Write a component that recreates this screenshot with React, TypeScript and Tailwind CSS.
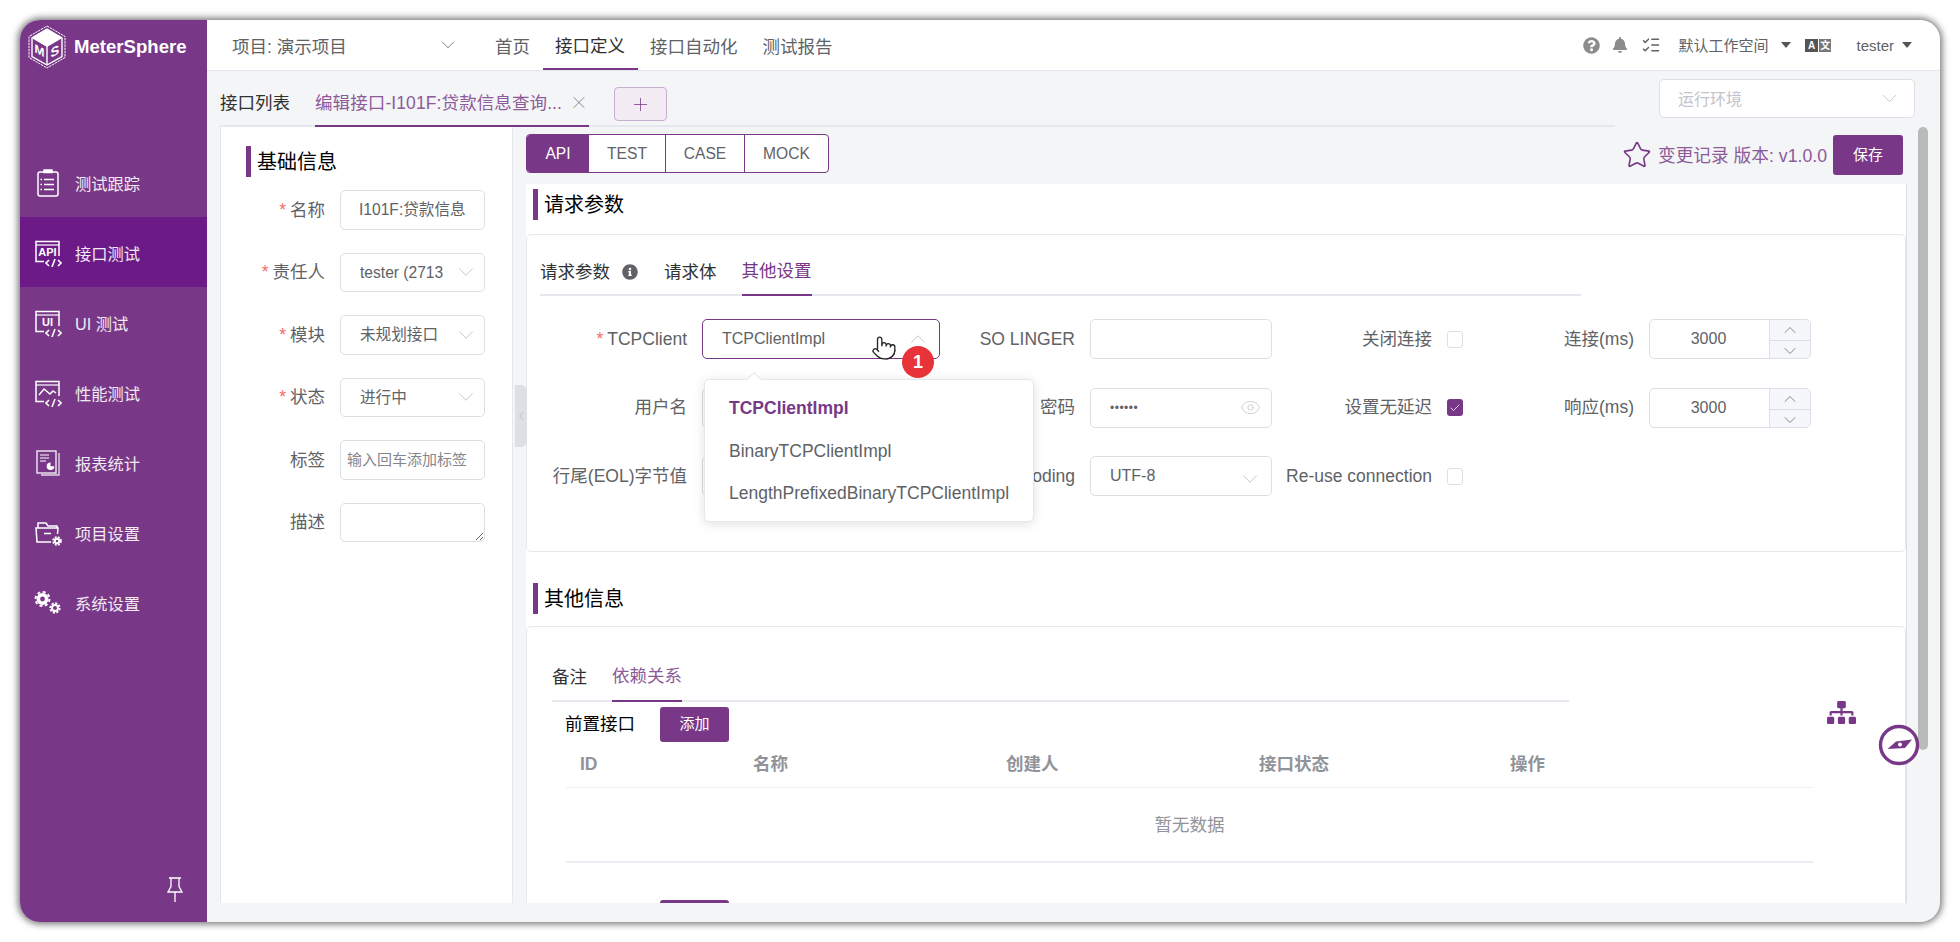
import { ReactNode } from 'react';
import { Check, ChevronDown, ChevronLeft, ChevronUp, Eye, ListChecks, Plus, Pointer, Star, X } from 'lucide-react';
import { FaBell, FaInfoCircle, FaQuestionCircle, FaSitemap } from 'react-icons/fa';

const box = 'rounded-[5px] border border-[#dcdfe6] bg-white';

function CodeTag({ label }: { label: string }) {
  return (
    <svg width="28" height="28" viewBox="0 0 28 28" fill="none" stroke="#fff" strokeWidth="1.5">
      <path d="M10 22.5H2V2.5h23V17" />
      <path d="M2 6h23" strokeWidth="1.2" />
      <text x="13.5" y="17" textAnchor="middle" fill="#fff" stroke="none" fontSize="11" fontWeight="700" fontFamily="Liberation Sans">{label}</text>
      <path d="M15 21l-3 3 3 3M24 21l3 3-3 3M21 20l-3 8" strokeWidth="1.6" />
    </svg>
  );
}

function NavIcon({ name }: { name: string }) {
  if (name === 'track') {
    return (
      <svg width="24" height="30" viewBox="0 0 24 30" fill="none" stroke="#fff" strokeWidth="1.5">
        <rect x="2" y="4" width="20" height="24" rx="2" />
        <path d="M8 4.5V2h8v2.5z" fill="#fff" />
        <path d="M8 11.5h10M8 16.5h10M8 21.5h10M4.5 11.5h1.5M4.5 16.5h1.5M4.5 21.5h1.5" />
      </svg>
    );
  }
  if (name === 'api') return <CodeTag label="API" />;
  if (name === 'ui') return <CodeTag label="UI" />;
  if (name === 'perf') {
    return (
      <svg width="28" height="28" viewBox="0 0 28 28" fill="none" stroke="#fff" strokeWidth="1.5">
        <path d="M10 22.5H2V2.5h23V17" />
        <path d="M2 6h23" strokeWidth="1.2" />
        <path d="M5 16l5-6 6 5 3-3 3 2" />
        <path d="M15 21l-3 3 3 3M24 21l3 3-3 3M21 20l-3 8" strokeWidth="1.6" />
      </svg>
    );
  }
  if (name === 'report') {
    return (
      <svg width="26" height="28" viewBox="0 0 26 28" fill="none" stroke="#fff" strokeWidth="1.4">
        <path d="M24 4v22H6" opacity="0.8" />
        <rect x="2" y="2" width="19" height="22" opacity="0.9" />
        <path d="M5 6h9M5 9h9M5 12h6" strokeWidth="1.2" />
        <path d="M15.5 13.5a3.8 3.8 0 1 0 3.8 3.8h-3.8z" fill="#fff" stroke="none" />
      </svg>
    );
  }
  if (name === 'project') {
    return (
      <svg width="28" height="26" viewBox="0 0 28 26" fill="none" stroke="#fff" strokeWidth="1.5">
        <path d="M17 22H3L2 8h22l-.5 6" />
        <path d="M4 8V3h8l2 3h9v2" />
        <path d="M10 13.5h7" />
        <circle cx="23" cy="21" r="2.2" strokeWidth="2" />
        <circle cx="23" cy="21" r="4" strokeWidth="1.6" strokeDasharray="2 1.2" />
      </svg>
    );
  }
  return (
    <svg width="28" height="26" viewBox="0 0 28 26" fill="none" stroke="#fff">
      <circle cx="8.5" cy="9" r="4.2" strokeWidth="3.6" />
      <circle cx="8.5" cy="9" r="7" strokeWidth="2" strokeDasharray="3 2.5" />
      <circle cx="21" cy="18" r="3" strokeWidth="2" />
      <circle cx="21" cy="18" r="4.8" strokeWidth="1.7" strokeDasharray="2.2 1.5" />
    </svg>
  );
}

function Logo() {
  return (
    <svg width="38" height="44" viewBox="0 0 38 44" fill="none" stroke="#fff">
      <path d="M19 1l18 10.5v21L19 43 1 32.5v-21z" strokeWidth="1" strokeDasharray="2.4 0.8" />
      <path d="M19 4l15 9v18.5L19 40 4 31.5V13z" strokeWidth="1.4" />
      <path d="M19 4.5l14.5 8.5L19 21.5 4.5 13z" fill="#fff" strokeWidth="1" />
      <path d="M19 21v19" strokeWidth="1.4" />
      <text x="0" y="0" fill="#fff" stroke="none" fontSize="12" fontWeight="700" fontFamily="Liberation Sans" transform="translate(6.5 27) skewY(28)">M</text>
      <text x="0" y="0" fill="#fff" stroke="none" fontSize="13" fontWeight="700" fontFamily="Liberation Sans" transform="translate(22.5 33) skewY(-28)">S</text>
    </svg>
  );
}

function SideItem({ icon, label, active }: { icon: string; label: string; active?: boolean }) {
  return (
    <div className={`flex h-[70px] items-center text-[16.25px] text-white/90 ${active ? 'bg-[#6c1a87]' : ''}`}>
      <div className="flex w-[55px] shrink-0 justify-center pt-[2px]">
        <NavIcon name={icon} />
      </div>
      <span className="pt-[4px]">{label}</span>
    </div>
  );
}

function Caret() {
  return <span className="h-0 w-0 border-x-[5.5px] border-t-[6px] border-x-transparent border-t-[#555]" />;
}

function Title({ text }: { text: string }) {
  return (
    <div className="flex h-[31px] items-center border-l-[5px] border-[#783887] pl-[6px] text-[20px] text-black">{text}</div>
  );
}

function FormRow({ label, required, children }: { label: string; required?: boolean; children: ReactNode }) {
  return (
    <div className="flex h-[39.5px] items-center">
      <div className="w-[104px] shrink-0 text-right text-[17.5px] text-[#606266]">
        {required && <span className="mr-[4px] text-[#f56c6c]">*</span>}
        {label}
      </div>
      <div className="ml-[15px] h-full w-[145px]">{children}</div>
    </div>
  );
}

function SideSelect({ value }: { value: string }) {
  return (
    <div className={`${box} flex h-full items-center pl-[19px] pr-[5px] text-[15.6px] text-[#606266]`}>
      <span className="flex-1 overflow-hidden whitespace-nowrap">{value}</span>
      <ChevronDown size={26} strokeWidth={0.9} color="#c0c4cc" className="shrink-0" />
    </div>
  );
}

function Label({ children, required }: { children: ReactNode; required?: boolean }) {
  return (
    <div className="flex h-[40px] items-center justify-end whitespace-nowrap pr-[15px] text-[17.5px] text-[#606266]">
      {required && <span className="mr-[4px] text-[#f56c6c]">*</span>}
      {children}
    </div>
  );
}

function Checkbox({ checked }: { checked?: boolean }) {
  return (
    <div className="flex h-[40px] items-center">
      {checked ? (
        <div className="flex h-[17px] w-[16px] items-center justify-center rounded-[3px] bg-[#783887]">
          <Check size={12} strokeWidth={1.5} color="#fff" />
        </div>
      ) : (
        <div className="h-[17px] w-[16px] rounded-[3px] border border-[#dcdfe6] bg-white" />
      )}
    </div>
  );
}

function NumberInput() {
  return (
    <div className={`${box} flex h-[40px] overflow-hidden text-[16px] text-[#606266]`}>
      <div className="flex flex-1 items-center justify-center pr-[2px]">3000</div>
      <div className="flex w-[41px] flex-col border-l border-[#dcdfe6] bg-[#f5f7fa]">
        <div className="flex flex-1 items-center justify-center border-b border-[#dcdfe6]">
          <ChevronUp size={20} strokeWidth={0.9} color="#606266" />
        </div>
        <div className="flex flex-1 items-center justify-center">
          <ChevronDown size={20} strokeWidth={0.9} color="#606266" />
        </div>
      </div>
    </div>
  );
}

function Dropdown() {
  return (
    <div className="absolute left-[684px] top-[359px] z-20 h-[143px] w-[330px] rounded-[5px] border border-[#e4e7ed] bg-white pt-[7px] shadow-[0_2px_12px_rgba(0,0,0,0.12)]">
      <div className="absolute left-[44px] top-[-6px] h-[10px] w-[10px] rotate-45 border-l border-t border-[#e4e7ed] bg-white" />
      <div className="flex h-[42.5px] items-center pl-[24px] text-[17.5px] font-bold text-[#783887]">TCPClientImpl</div>
      <div className="flex h-[42.5px] items-center pl-[24px] text-[17.5px] text-[#606266]">BinaryTCPClientImpl</div>
      <div className="flex h-[42.5px] items-center pl-[24px] text-[17.5px] text-[#606266]">LengthPrefixedBinaryTCPClientImpl</div>
    </div>
  );
}

export default function App() {
  return (
    <div className="h-[942px] w-[1960px] overflow-hidden bg-white p-[20px] font-['Liberation_Sans','Noto_Sans_CJK_SC',sans-serif]">
      <div className="relative flex h-[902px] w-[1920px] rounded-[20px] bg-[#f4f5f7] shadow-[0_0_7px_2px_rgba(0,0,0,0.55)]">
        <aside className="flex w-[187px] shrink-0 flex-col rounded-l-[20px] bg-[#783887] pb-[20px]">
          <div className="flex h-[52px] items-center pl-[8px] pt-[2px]">
            <Logo />
            <span className="ml-[8px] text-[18.6px] font-bold text-white">MeterSphere</span>
          </div>
          <nav className="mt-[75px]">
            <SideItem icon="track" label="测试跟踪" />
            <SideItem icon="api" label="接口测试" active />
            <SideItem icon="ui" label="UI 测试" />
            <SideItem icon="perf" label="性能测试" />
            <SideItem icon="report" label="报表统计" />
            <SideItem icon="project" label="项目设置" />
            <SideItem icon="gear" label="系统设置" />
          </nav>
          <div className="mt-auto flex justify-end pr-[24px]">
            <svg width="16" height="25" viewBox="0 0 16 25" fill="none" stroke="#fff" strokeWidth="1.3">
              <path d="M2 1h12M4 1v8.5L1 15h14l-3-5.5V1M8 15v10" />
            </svg>
          </div>
        </aside>

        <main className="flex min-w-0 flex-1 flex-col overflow-hidden rounded-r-[20px]">
          <header className="flex h-[51px] shrink-0 items-stretch border-b border-[#e4e7ed] bg-white pr-[28px] text-[17.5px] text-[#606266]">
            <div className="ml-[25px] flex w-[250.5px] items-center pr-[24px]">
              <span className="flex-1 pt-[4px]">项目: 演示项目</span>
              <ChevronDown size={22} strokeWidth={1.1} color="#909399" />
            </div>
            <div className="flex items-center px-[12.5px] pt-[4px]">首页</div>
            <div className="flex items-center border-b-2 border-[#783887] px-[12.5px] pt-[4px] text-[#303133]">接口定义</div>
            <div className="flex items-center px-[12.5px] pt-[4px]">接口自动化</div>
            <div className="flex items-center px-[12.5px] pt-[4px]">测试报告</div>
            <div className="ml-auto flex items-center">
              <FaQuestionCircle size={17} color="#8c8c8c" />
              <FaBell size={16} color="#8c8c8c" className="ml-[12px]" />
              <ListChecks size={20} strokeWidth={1.8} color="#606266" className="ml-[13px]" />
              <span className="ml-[17px] pt-[2px] text-[15px]">默认工作空间</span>
              <span className="ml-[13px] flex"><Caret /></span>
              <span className="ml-[14px] flex h-[13px] w-[26px] gap-[1px] text-[10px] font-bold leading-[13px]">
                <span className="flex-1 bg-[#555] text-center text-white">A</span>
                <span className="flex-1 bg-[#777] text-center text-white">文</span>
              </span>
              <span className="ml-[25px] pt-[2px] text-[15px]">tester</span>
              <span className="ml-[8px] flex"><Caret /></span>
            </div>
          </header>

          <div className="flex h-[56px] shrink-0 pl-[13px]">
            <div className="flex w-[1395px] items-stretch border-b-2 border-[#e4e7ed] text-[17.5px]">
              <div className="flex items-center pt-[11px] text-[#303133]">接口列表</div>
              <div className="-mb-[2px] ml-[25px] flex w-[274px] items-center border-b-2 border-[#783887] pt-[11px] text-[#8d5a9a]">
                <span className="whitespace-nowrap tracking-[0.1px]">编辑接口-I101F:贷款信息查询...</span>
                <X size={21} strokeWidth={0.9} color="#606266" className="ml-[7px] -translate-y-[1px]" />
              </div>
              <div className="ml-[25px] mt-[16px] flex h-[34px] w-[53px] items-center justify-center rounded-[4px] border border-[#c9afcf] bg-[#f2ebf3]">
                <Plus size={21} strokeWidth={0.9} color="#783887" />
              </div>
            </div>
            <div className={`${box} ml-[44px] mt-[8px] flex h-[39px] w-[256px] items-center pl-[18px] pr-[12px] text-[16px] text-[#c0c4cc]`}>
              <span className="flex-1 pt-[2px]">运行环境</span>
              <ChevronDown size={25} strokeWidth={0.9} color="#c0c4cc" />
            </div>
          </div>

          <div className="flex min-h-0 flex-1 pb-[19px] pl-[13px]">
            <section className="w-[293px] shrink-0 border-x border-[#e4e7ed] bg-white pl-[25px] pt-[19px]">
              <Title text="基础信息" />
              <div className="-ml-[25px] mt-[13px] flex flex-col gap-[23px]">
                <FormRow label="名称" required>
                  <div className={`${box} flex h-full items-center pl-[18px] text-[15.6px] text-[#606266]`}>
                    <span className="whitespace-nowrap">I101F:贷款信息</span>
                  </div>
                </FormRow>
                <FormRow label="责任人" required><SideSelect value="tester (2713" /></FormRow>
                <FormRow label="模块" required><SideSelect value="未规划接口" /></FormRow>
                <FormRow label="状态" required><SideSelect value="进行中" /></FormRow>
                <FormRow label="标签">
                  <div className={`${box} flex h-full items-center pl-[6px] text-[15px] text-[#85878c]`}>
                    <span className="whitespace-nowrap">输入回车添加标签</span>
                  </div>
                </FormRow>
                <FormRow label="描述">
                  <textarea className={`${box} block h-full w-full resize outline-none`} />
                </FormRow>
              </div>
            </section>

            <section className="ml-[13px] flex w-[1381px] shrink-0 flex-col">
              <div className="flex h-[57px] shrink-0 items-start justify-between pt-[7px]">
                <div className="flex h-[39px] overflow-hidden rounded-[4px] border border-[#783887] bg-white text-[15.6px] text-[#606266]">
                  <div className="flex w-[62px] items-center justify-center bg-[#783887] text-white">API</div>
                  <div className="flex w-[76px] items-center justify-center">TEST</div>
                  <div className="flex w-[79px] items-center justify-center border-l border-[#783887]">CASE</div>
                  <div className="flex w-[84px] items-center justify-center border-l border-[#783887]">MOCK</div>
                </div>
                <div className="mt-[1px] flex h-[40px] items-center pr-[4px]">
                  <Star size={30} strokeWidth={1.3} color="#783887" />
                  <span className="ml-[6px] pt-[2px] text-[17.7px] text-[#8d5a9a]">变更记录 版本: v1.0.0</span>
                  <div className="ml-[6px] flex h-[40px] w-[70px] items-center justify-center rounded-[3px] bg-[#783887] text-[15px] text-white">保存</div>
                </div>
              </div>

              <div className="min-h-0 flex-1 overflow-hidden border-r border-[#dce0e6] bg-white pt-[5px]">
                <div className="pl-[7px]"><Title text="请求参数" /></div>
                <div className="mt-[14px] h-[318px] rounded-[5px] border border-[#e4e7ed] pl-[13px]">
                  <div className="flex h-[61px] w-[1041px] border-b-2 border-[#e4e7ed] text-[17.5px] text-[#303133]">
                    <div className="-mb-[2px] flex h-[61px] items-center pt-[13px]">
                      请求参数
                      <FaInfoCircle size={16} color="#606266" className="ml-[12px]" />
                    </div>
                    <div className="ml-[26px] flex h-[61px] items-center pt-[13px]">请求体</div>
                    <div className="ml-[25px] flex h-[61px] items-center border-b-2 border-[#783887] pt-[13px] text-[#783887]">其他设置</div>
                  </div>

                  <div className="-ml-[13px] mt-[23px] grid grid-cols-[175px_238px_150px_182px_175px_16px_186px_162px] gap-y-[28.5px]">
                    <Label required>TCPClient</Label>
                    <div className="flex h-[40px] items-center rounded-[5px] border border-[#783887] bg-white pl-[19px] pr-[8px] text-[16px] text-[#606266]">
                      <span className="flex-1">TCPClientImpl</span>
                      <ChevronUp size={26} strokeWidth={0.9} color="#c0c4cc" />
                    </div>
                    <Label>SO LINGER</Label>
                    <div className={`${box} h-[40px]`} />
                    <Label>关闭连接</Label>
                    <Checkbox />
                    <Label>连接(ms)</Label>
                    <NumberInput />

                    <Label>用户名</Label>
                    <div className={`${box} h-[40px]`} />
                    <Label>密码</Label>
                    <div className={`${box} flex h-[40px] items-center pl-[19px] pr-[10px] text-[16px] text-[#606266]`}>
                      <span className="flex-1 text-[12px] tracking-[0.5px]">••••••</span>
                      <Eye size={21} strokeWidth={0.9} color="#c0c4cc" />
                    </div>
                    <Label>设置无延迟</Label>
                    <Checkbox checked />
                    <Label>响应(ms)</Label>
                    <NumberInput />

                    <Label>行尾(EOL)字节值</Label>
                    <div className={`${box} h-[40px]`} />
                    <Label>Encoding</Label>
                    <div className={`${box} flex h-[40px] items-center pl-[19px] pr-[8px] text-[16px] text-[#606266]`}>
                      <span className="flex-1">UTF-8</span>
                      <ChevronDown size={26} strokeWidth={0.9} color="#c0c4cc" className="mt-[5px]" />
                    </div>
                    <Label>Re-use connection</Label>
                    <Checkbox />
                  </div>
                </div>

                <div className="mt-[31px] pl-[7px]"><Title text="其他信息" /></div>
                <div className="mt-[12px] rounded-[5px] border border-[#e4e7ed] pb-[40px]">
                  <div className="ml-[25px] flex h-[75px] w-[1017px] border-b-2 border-[#e4e7ed] text-[17.5px] text-[#303133]">
                    <div className="flex h-[75px] items-center pt-[25px]">备注</div>
                    <div className="ml-[25px] flex h-[75px] items-center border-b-2 border-[#783887] pt-[25px] text-[#8d5a9a]">依赖关系</div>
                  </div>
                  <div className="ml-[38px] mt-[5px] flex h-[35px] items-center text-[17.5px] text-black">
                    <span className="w-[70px]">前置接口</span>
                    <div className="ml-[25px] flex h-[35px] w-[69px] items-center justify-center rounded-[3px] bg-[#783887] text-[15px] text-white">添加</div>
                  </div>
                  <div className="ml-[39px] w-[1247px]">
                    <div className="grid h-[46px] grid-cols-[173px_253px_253px_251px_1fr] items-center border-b border-[#ebeef5] text-[17.5px] font-bold text-[#909399]">
                      <span className="pl-[14px]">ID</span>
                      <span className="pl-[14px]">名称</span>
                      <span className="pl-[14px]">创建人</span>
                      <span className="pl-[14px]">接口状态</span>
                      <span className="pl-[14px]">操作</span>
                    </div>
                    <div className="flex h-[75px] items-center justify-center border-b-2 border-[#ebeef5] pt-[2px] text-[17.5px] text-[#909399]">暂无数据</div>
                  </div>
                  <div className="ml-[133px] mt-[37px] h-[35px] w-[69px] rounded-[3px] bg-[#783887]" />
                </div>
              </div>
            </section>
          </div>
        </main>

        <Dropdown />
        <Pointer size={26} strokeWidth={1.2} color="#222" fill="#fff" className="absolute left-[851px] top-[315px] z-30" />
        <div className="absolute left-[882px] top-[326px] z-30 flex h-[32px] w-[32px] items-center justify-center rounded-full bg-[#e8333a] text-[18px] font-bold text-white">1</div>
        <div className="absolute left-[495px] top-[365px] flex h-[62px] w-[12px] items-center justify-center rounded-r-[6px] bg-[#dcdfe6]">
          <ChevronLeft size={12} strokeWidth={1} color="#909399" />
        </div>
        <div className="absolute left-[1898px] top-[107px] h-[623px] w-[10px] rounded-full bg-[#b9bbba]" />
        <FaSitemap size={29} color="#783887" className="absolute left-[1807px] top-[678px]" />
        <svg width="42" height="42" viewBox="0 0 42 42" className="absolute left-[1858px] top-[704px] z-10">
          <circle cx="21" cy="21" r="18.5" fill="#fff" stroke="#783887" strokeWidth="3.4" />
          <path d="M9.5 25L18 17.5 34 15.5 27 24z" fill="#783887" />
          <circle cx="22" cy="20.5" r="2" fill="#fff" />
        </svg>
      </div>
    </div>
  );
}
